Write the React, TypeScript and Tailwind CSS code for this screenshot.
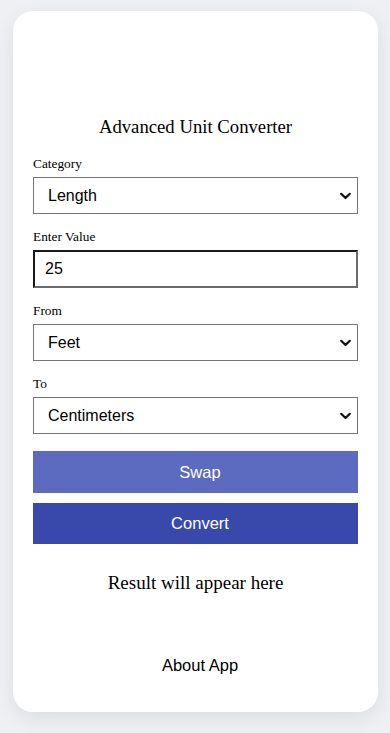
import React, { useState } from "react";

function Chevron() {
  return (
    <svg
      className="pointer-events-none absolute right-[7px] top-1/2 -translate-y-1/2"
      width="11"
      height="7"
      viewBox="0 0 11 7"
      fill="none"
    >
      <path d="M1.2 1.2 L5.5 5.5 L9.8 1.2" stroke="#111" strokeWidth="2.2" strokeLinecap="round" strokeLinejoin="round" />
    </svg>
  );
}

function Field({
  label,
  value,
  options,
  onChange,
}: {
  label: string;
  value: string;
  options: string[];
  onChange: (v: string) => void;
}) {
  return (
    <div className="mt-[15px] flex flex-col gap-[6px]">
      <label className="block text-[13.33px] leading-[15px] text-black font-['Liberation_Serif','Times_New_Roman',serif]">
        {label}
      </label>
      <div className="relative">
        <select
          className="block w-full h-[37px] appearance-none border border-[#767676] bg-white pl-[14px] pr-6 text-[16px] text-black outline-none font-['Liberation_Sans',Arial,sans-serif]"
          value={value}
          onChange={(e) => onChange(e.target.value)}
        >
          {options.map((o) => (
            <option key={o}>{o}</option>
          ))}
        </select>
        <Chevron />
      </div>
    </div>
  );
}

export default function App() {
  const [category, setCategory] = useState("Length");
  const [value, setValue] = useState("25");
  const [from, setFrom] = useState("Feet");
  const [to, setTo] = useState("Centimeters");

  const units = ["Feet", "Meters", "Centimeters", "Inches"];

  return (
    <div className="min-h-[733px] w-full bg-[#eff0f4] pt-[11px] pb-[22px]">
      <div className="mx-[13px] w-[365px] flex flex-col rounded-[20px] bg-white shadow-[0_6px_20px_rgba(0,0,0,0.08)] px-[20px] pt-[105px] pb-[37px]">
        <h1 className="text-center text-[18.72px] leading-[22px] text-black font-['Liberation_Serif','Times_New_Roman',serif]">
          Advanced Unit Converter
        </h1>

        <div className="mt-[3px]">
          <Field
            label="Category"
            value={category}
            options={["Length", "Weight", "Temperature"]}
            onChange={setCategory}
          />
        </div>

        <div className="mt-[15px] flex flex-col gap-[6px]">
          <label className="block text-[13.33px] leading-[15px] text-black font-['Liberation_Serif','Times_New_Roman',serif]">
            Enter Value
          </label>
          <input
            className="block w-full h-[38px] border-2 border-[#1a1a1a] border-r-[#6b6b6b] border-b-[#6b6b6b] bg-white px-[10px] text-[16px] text-black outline-none font-['Liberation_Sans',Arial,sans-serif]"
            value={value}
            onChange={(e) => setValue(e.target.value)}
          />
        </div>

        <Field label="From" value={from} options={units} onChange={setFrom} />
        <Field label="To" value={to} options={units} onChange={setTo} />

        <button
          className="mt-[17px] block w-full h-[42px] bg-[#5c6bc0] pl-[9px] text-[16.5px] text-white font-['Liberation_Sans',Arial,sans-serif]"
          onClick={() => {
            setFrom(to);
            setTo(from);
          }}
        >
          Swap
        </button>
        <button className="mt-[10px] block w-full h-[41px] bg-[#3949ab] pl-[9px] text-[16.5px] text-white font-['Liberation_Sans',Arial,sans-serif]">
          Convert
        </button>

        <p className="mt-[28px] text-center text-[19px] leading-[22px] text-black font-['Liberation_Serif','Times_New_Roman',serif]">
          Result will appear here
        </p>

        <button className="mt-[61px] block w-full pl-[9px] text-center text-[16.5px] leading-[20px] text-black font-['Liberation_Sans',Arial,sans-serif]">
          About App
        </button>
      </div>
    </div>
  );
}
